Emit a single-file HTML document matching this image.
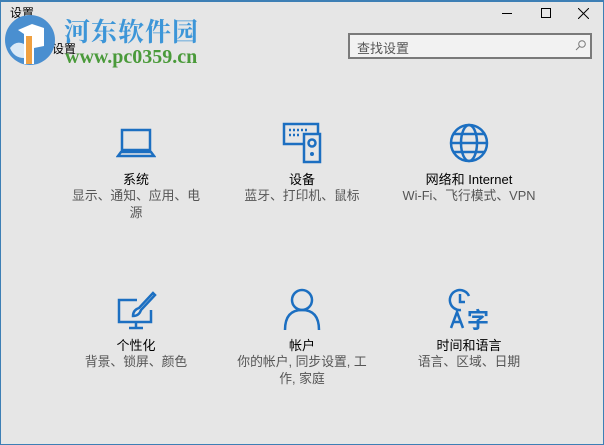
<!DOCTYPE html>
<html><head><meta charset="utf-8"><style>
*{margin:0;padding:0;box-sizing:border-box}
body{width:604px;height:445px;overflow:hidden;background:#e6e6e6;font-family:"Liberation Sans","Noto Sans CJK SC",sans-serif;position:relative}
.win{position:absolute;left:0;top:0;width:604px;height:445px;border:1px solid #3d7fb5;border-top:2px solid #3d7fb5}
.t{position:absolute;font-size:12px;color:#000}
.item{position:absolute;width:160px;text-align:center}
.item svg{display:block;margin:0 auto}
.item .h{font-size:13px;color:#000;margin-top:7px;line-height:17px}
.item .s{font-size:12.8px;color:#555;line-height:16.5px;width:132px;margin:0 auto}
</style></head><body>
<div class="win"></div>
<div class="t" style="left:10px;top:4px;font-size:12px">设置</div>
<div class="t" style="left:52px;top:40px;font-size:12px">设置</div>
<svg style="position:absolute;left:4px;top:10px" width="52" height="58" viewBox="0 0 52 58">
<circle cx="26" cy="30" r="25" fill="#4a8fd0"/>
<path d="M14 20 L28 14 L40 18 L40 36 L30 38 L30 54 L20 54 L20 24 Z" fill="#fff"/>
<path d="M22 26 L28 26 L28 54 L22 54Z" fill="#f0a040"/>
<path d="M6 38 Q12 30 20 34 L20 48 Q10 48 6 38Z" fill="#fff" opacity=".8"/>
</svg>
<div style="position:absolute;left:64px;top:12px;font:bold 26px 'Liberation Serif','Noto Serif CJK SC',serif;color:#3d96d8;letter-spacing:1px">河东软件园</div>
<div style="position:absolute;left:65px;top:46px;font:bold 20px 'Liberation Serif',serif;color:#4a9a3a">www.pc0359.cn</div>
<div style="position:absolute;left:502px;top:13px;width:10px;height:1px;background:#000"></div>
<div style="position:absolute;left:541px;top:8px;width:10px;height:10px;border:1px solid #000"></div>
<svg style="position:absolute;left:578px;top:8px" width="11" height="11"><path d="M0 0L11 11M11 0L0 11" stroke="#000"/></svg>
<div style="position:absolute;left:348px;top:33px;width:244px;height:26px;border:2px solid #7a7a7a;background:#f2f2f2"></div>
<div class="t" style="left:357px;top:38px;font-size:13px;color:#555">查找设置</div>
<svg style="position:absolute;left:575px;top:40px" width="11" height="11"><circle cx="7" cy="4" r="3.3" fill="none" stroke="#777"/><path d="M4.5 6.5L1 10" stroke="#777"/></svg>

<div class="item" style="left:56px;top:124px">
<svg width="40" height="40" viewBox="0 0 40 40"><rect x="6" y="6" width="28" height="20" fill="none" stroke="#1c6fc1" stroke-width="2.5"/><path d="M2 32H38L35 28H5Z" fill="none" stroke="#1c6fc1" stroke-width="2.5"/></svg>
<div class="h">系统</div><div class="s">显示、通知、应用、电源</div></div>

<div class="item" style="left:222px;top:122px">
<svg width="44" height="42" viewBox="0 0 44 42"><rect x="4" y="2" width="34" height="20" fill="none" stroke="#1c6fc1" stroke-width="2.5"/><path d="M9 8h20M9 13h10" stroke="#1c6fc1" stroke-width="2.5" stroke-dasharray="2 2"/><rect x="24" y="12" width="16" height="28" fill="#e6e6e6" stroke="#1c6fc1" stroke-width="2.5"/><circle cx="32" cy="21" r="3.5" fill="none" stroke="#1c6fc1" stroke-width="2.5"/><circle cx="32" cy="32" r="2" fill="#1c6fc1"/></svg>
<div class="h">设备</div><div class="s">蓝牙、打印机、鼠标</div></div>

<div class="item" style="left:389px;top:122px">
<svg width="42" height="42" viewBox="0 0 42 42"><g fill="none" stroke="#1c6fc1" stroke-width="2.5"><circle cx="21" cy="21" r="18"/><ellipse cx="21" cy="21" rx="8" ry="18"/><path d="M3 21H39M6 12H36M6 30H36"/></g></svg>
<div class="h">网络和 Internet</div><div class="s" style="width:160px">Wi-Fi、飞行模式、VPN</div></div>

<div class="item" style="left:56px;top:290px">
<svg width="42" height="40" viewBox="0 0 42 40"><g fill="none" stroke="#1c6fc1" stroke-width="2.5"><path d="M22 10H4V32H36V20"/><path d="M14 38H28M21 32V38"/><path d="M38 3L24 18Q18 20 18 26Q24 26 26 20L40 5Z"/></g></svg>
<div class="h">个性化</div><div class="s">背景、锁屏、颜色</div></div>

<div class="item" style="left:222px;top:288px">
<svg width="42" height="42" viewBox="0 0 42 42"><g fill="none" stroke="#1c6fc1" stroke-width="2.5"><circle cx="21" cy="12" r="10"/><path d="M4 42Q4 22 21 22Q38 22 38 42"/></g></svg>
<div class="h">帐户</div><div class="s">你的帐户, 同步设置, 工作, 家庭</div></div>

<div class="item" style="left:389px;top:288px">
<svg width="44" height="42" viewBox="0 0 44 42"><g fill="none" stroke="#1c6fc1" stroke-width="2.5"><path d="M14 22A10 10 0 1 1 22 8"/><path d="M13 6V14H18"/><path d="M4 40L10 24L16 40M6 34H14"/></g><text x="20" y="40" font-size="22" font-weight="bold" fill="#1c6fc1" font-family="Noto Sans CJK SC">字</text></svg>
<div class="h">时间和语言</div><div class="s">语言、区域、日期</div></div>
</body></html>
